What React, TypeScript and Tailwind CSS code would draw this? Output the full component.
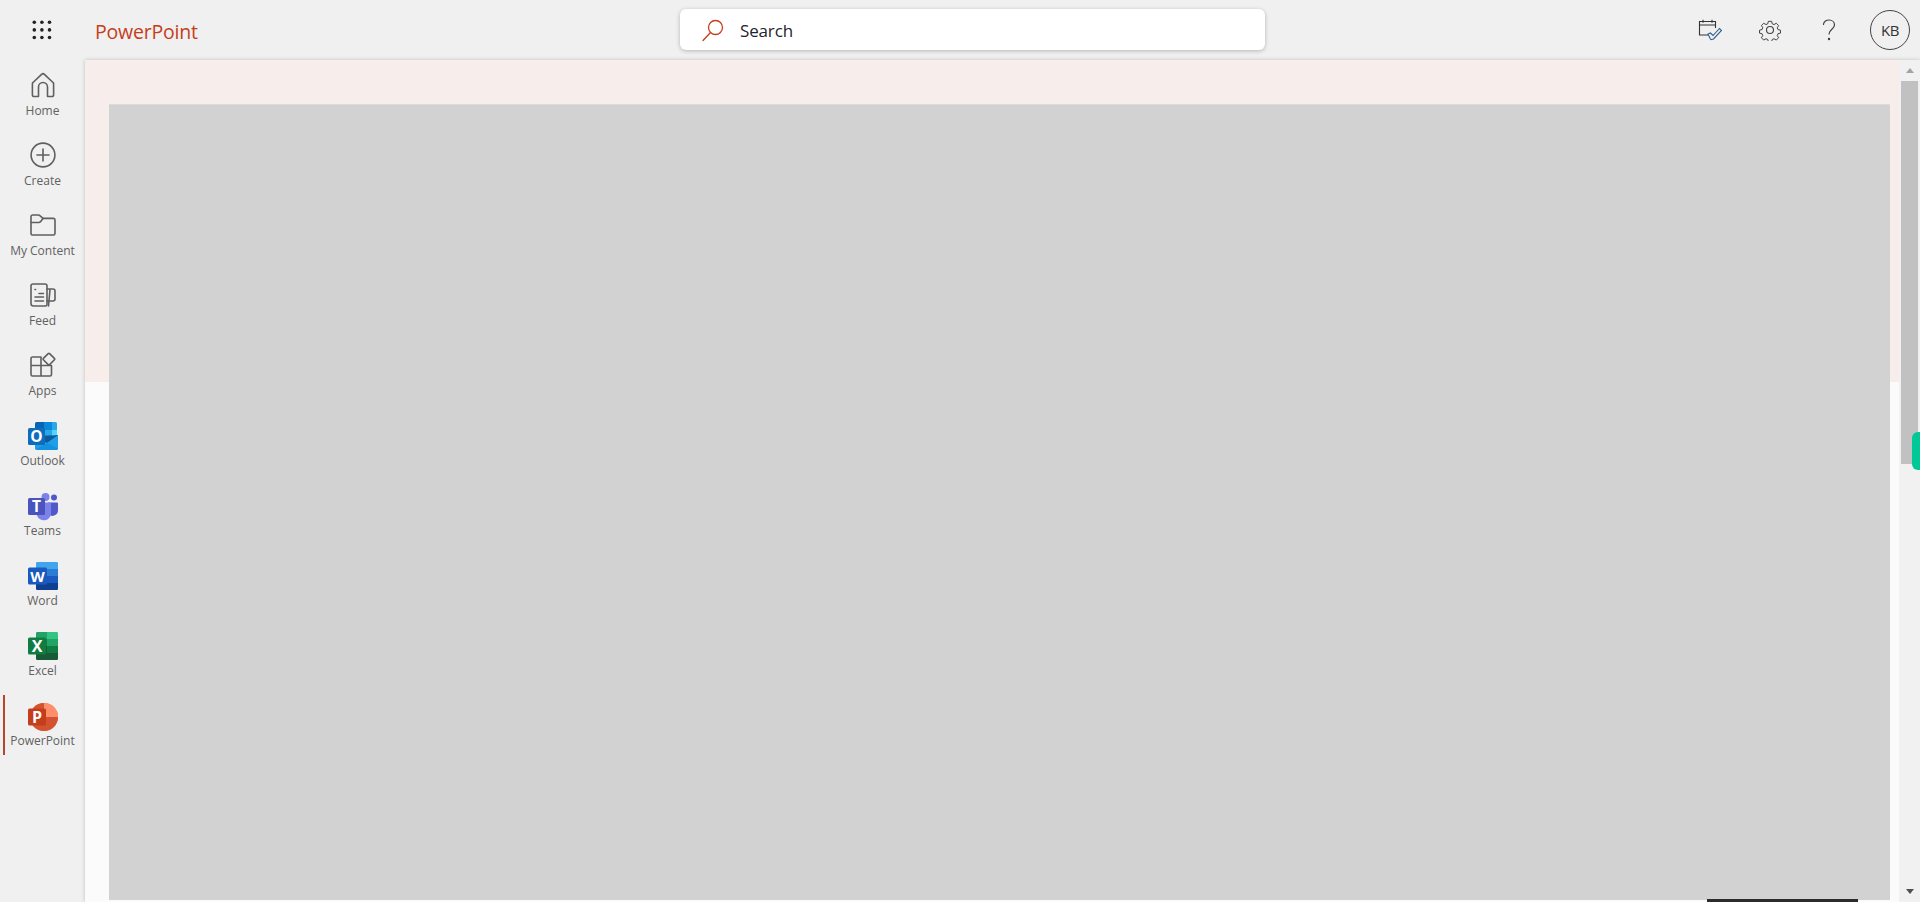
const font = "font-['Open_Sans','Noto_Sans',sans-serif]";

function Grid() {
  const dots = [0, 1, 2, 3, 4, 5, 6, 7, 8];
  return (
    <svg width="20" height="20" viewBox="0 0 20 20" fill="#222">
      {dots.map((d) => (
        <circle key={d} cx={2.3 + (d % 3) * 7.6} cy={2.3 + Math.floor(d / 3) * 7.6} r="1.800" />
      ))}
    </svg>
  );
}

const line = { fill: "none", stroke: "#5f5f5f", strokeWidth: 1.6, strokeLinejoin: "round" as const, strokeLinecap: "round" as const };

function Home() {
  return (
    <svg width="24" height="26" viewBox="0 0 24 26" {...line}>
      <path d="M2 10.500 10.600 2.400a2 2 0 0 1 2.800 0L22 10.500a1.500 1.500 0 0 1 .6 1.200V23a1.500 1.500 0 0 1-1.500 1.500h-4.600V15a4.500 4.500 0 0 0-9 0v9.500H3A1.500 1.500 0 0 1 1.400 23V11.700a1.500 1.500 0 0 1 .6-1.200Z" />
    </svg>
  );
}
function Create() {
  return (
    <svg width="26" height="26" viewBox="0 0 26 26" {...line}>
      <circle cx="13" cy="13" r="11.900" />
      <path d="M13 7v12M7 13h12" />
    </svg>
  );
}
function Folder() {
  return (
    <svg width="26" height="22" viewBox="0 0 26 22" {...line}>
      <path d="M2.700 1h5.600c.6 0 1.200.2 1.600.6L13 4.400H23.500A1.600 1.600 0 0 1 25 6v13.500a1.600 1.600 0 0 1-1.600 1.500H2.700A1.600 1.600 0 0 1 1 19.500V2.700A1.600 1.600 0 0 1 2.700 1Z" />
      <path d="M1 8.500h7.800c.6 0 1.100-.2 1.500-.6L13 4.400" />
    </svg>
  );
}
function Feed() {
  return (
    <svg width="26" height="24" viewBox="0 0 26 24" {...line}>
      <path d="M3 1h12a2 2 0 0 1 2 2v18.500a1.500 1.500 0 0 1-1.500 1.500H3.500A2.500 2.500 0 0 1 1 20.500V3a2 2 0 0 1 2-2Z" />
      <path d="M17 6h6a2 2 0 0 1 2 2v8a2 2 0 0 1-2 2h-6M20 6.500 18.500 23" />
      <path d="M5 6.500h.6M9 10.500h4.500M5 14h8.500M5 18h8.500" />
    </svg>
  );
}
function Apps() {
  return (
    <svg width="26" height="26" viewBox="0 0 26 26" {...line}>
      <path d="M2.500 5H11v8.500H1V6.500A1.500 1.500 0 0 1 2.500 5ZM1 13.500h10V24H2.500A1.500 1.500 0 0 1 1 22.500v-9ZM11 13.500h10.500V22.500a1.500 1.500 0 0 1-1.500 1.500H11V13.500Z" />
      <path d="m19.600 1.600 4.800 4.800a1 1 0 0 1 0 1.400l-4.800 4.800a1 1 0 0 1-1.400 0l-4.800-4.800a1 1 0 0 1 0-1.400l4.800-4.800a1 1 0 0 1 1.400 0Z" />
    </svg>
  );
}

const letter = { fill: "#fff", fontFamily: "'Open Sans',sans-serif", fontWeight: 700, textAnchor: "middle" as const };

function Outlook() {
  return (
    <svg width="30" height="28" viewBox="0 0 30 28">
      <path d="M7 1.500A1.500 1.500 0 0 1 8.500 0H24v8H7Z" fill="#0364b8" />
      <rect x="16" y="0" width="8" height="8" fill="#0a87d8" />
      <path d="M24 0h3.500A1.500 1.500 0 0 1 29 1.500V12h-5Z" fill="#28a8ea" />
      <rect x="7" y="8" width="9" height="7" fill="#0078d4" />
      <rect x="16" y="8" width="8" height="7" fill="#28a8ea" />
      <rect x="24" y="8" width="5" height="5" fill="#50d9ff" />
      <path d="M7 14h23v12.500a1.500 1.500 0 0 1-1.500 1.500H9a2 2 0 0 1-2-2Z" fill="#1490df" />
      <path d="m9 14 21-1v1L19 21Z" fill="#0f5a9e" />
      <path d="M7 15 19 21l11-8v13.500L19 21 8 27.500a1.500 1.500 0 0 1-1-1.500Z" fill="#1f9fe6" />
      <rect x="0" y="6" width="17" height="17" rx="1.500" fill="#0f6cbd" />
      <text x="8.500" y="20" fontSize="15.500" {...letter}>O</text>
    </svg>
  );
}
function Teams() {
  return (
    <svg width="30" height="28" viewBox="0 0 30 28">
      <circle cx="26" cy="4.500" r="3" fill="#5059c9" />
      <path d="M20 9.500h9a1 1 0 0 1 1 1v7a5.500 5.500 0 0 1-10 3Z" fill="#5059c9" />
      <circle cx="17.500" cy="4" r="4" fill="#7b83eb" />
      <path d="M9 9.500h13a1 1 0 0 1 1 1V20a7.200 7.200 0 0 1-14 2.500Z" fill="#7b83eb" />
      <rect x="0" y="5" width="17" height="17" rx="1.500" fill="#4b53bc" />
      <text x="8.500" y="19" fontSize="15.500" {...letter}>T</text>
    </svg>
  );
}
function Word() {
  return (
    <svg width="30" height="28" viewBox="0 0 30 28">
      <path d="M8 1.200A1.200 1.200 0 0 1 9.200 0H28.800A1.200 1.200 0 0 1 30 1.200V7H8Z" fill="#41a5ee" />
      <rect x="8" y="7" width="22" height="7" fill="#2b7cd3" />
      <rect x="8" y="14" width="22" height="7" fill="#185abd" />
      <path d="M8 21h22v5.800a1.200 1.200 0 0 1-1.200 1.200H9.200A1.200 1.200 0 0 1 8 26.800Z" fill="#103f91" />
      <rect x="0" y="5.500" width="19" height="17" rx="1.500" fill="#185abd" />
      <text x="9.500" y="19.500" fontSize="15" {...letter}>W</text>
    </svg>
  );
}
function Excel() {
  return (
    <svg width="30" height="28" viewBox="0 0 30 28">
      <path d="M8 1.200A1.200 1.200 0 0 1 9.200 0H19v7H8Z" fill="#21a366" />
      <path d="M19 0h9.800A1.200 1.200 0 0 1 30 1.200V7H19Z" fill="#33c481" />
      <rect x="8" y="7" width="11" height="7" fill="#107c41" />
      <rect x="19" y="7" width="11" height="7" fill="#21a366" />
      <rect x="8" y="14" width="11" height="7" fill="#185c37" />
      <rect x="19" y="14" width="11" height="7" fill="#107c41" />
      <path d="M8 21h22v5.800a1.200 1.200 0 0 1-1.200 1.200H9.200A1.200 1.200 0 0 1 8 26.800Z" fill="#185c37" />
      <rect x="0" y="5.500" width="18" height="17" rx="1.500" fill="#107c41" />
      <text x="9" y="19.700" fontSize="16" {...letter}>X</text>
    </svg>
  );
}
function Ppt() {
  return (
    <svg width="30" height="28" viewBox="0 0 30 28">
      <circle cx="16" cy="14" r="14" fill="#ed6c47" />
      <path d="M16 0a14 14 0 0 1 14 14H16Z" fill="#ff8f6b" />
      <path d="M16 0a14 14 0 0 0-14 14h14Z" fill="#d35230" />
      <path d="M2 14a14 14 0 0 0 14 14 14 14 0 0 0 14-14H16Z" fill="#d35230" />
      <rect x="0" y="5.500" width="18" height="17" rx="1.500" fill="#c43e1c" />
      <text x="9" y="19.700" fontSize="16" {...letter}>P</text>
    </svg>
  );
}

const nav = [
  { label: "Home", icon: <Home />, box: "h-8" },
  { label: "Create", icon: <Create />, box: "h-8" },
  { label: "My Content", icon: <Folder />, box: "h-8" },
  { label: "Feed", icon: <Feed />, box: "h-8" },
  { label: "Apps", icon: <Apps />, box: "h-8" },
  { label: "Outlook", icon: <Outlook />, box: "h-8 pt-[2px]" },
  { label: "Teams", icon: <Teams />, box: "h-8 pt-[3px]" },
  { label: "Word", icon: <Word />, box: "h-8 pt-[2px]" },
  { label: "Excel", icon: <Excel />, box: "h-8 pt-[2px]" },
  { label: "PowerPoint", icon: <Ppt />, box: "h-8 pt-[3px]", active: true },
];

export default function App() {
  return (
    <div className={`${font} flex h-[902px] w-[1920px] flex-col overflow-hidden bg-[#f0f0f0]`}>
      <header className="flex h-[60px] shrink-0 items-center">
        <div className="flex w-[85px] shrink-0 justify-center pr-[1px] pb-[1px]">
          <Grid />
        </div>
        <div className="w-[595px] shrink-0 pt-[3px] pl-[10px] text-[19.500px] leading-none tracking-[-0.2px] text-[#c43e1c]">PowerPoint</div>
        <div className="mb-[1px] flex h-[41px] w-[585px] shrink-0 items-center rounded-[6px] bg-white pl-[21px] shadow-[0_1px_4px_rgba(0,0,0,0.25)]">
          <svg width="24" height="24" viewBox="0 0 24 24" fill="none" stroke="#c43e1c" strokeWidth="1.300" strokeLinecap="round">
            <circle cx="14.500" cy="9.500" r="7" />
            <path d="M9.500 14.500 2 22.500" />
          </svg>
          <span className="ml-[15px] pt-[2px] text-[17px] tracking-[-0.15px] text-[#1f2430]">Search</span>
        </div>
        <div className="ml-auto flex items-center pr-[10px]">
          <svg className="mr-[37px]" width="24" height="22" viewBox="0 0 24 22" fill="none" stroke="#333" strokeWidth="1.100">
            <path d="M10 16H1.500V2.500h16V9" />
            <path d="M1.500 6h16M5 .8v3M14 .8v3" />
            <path d="m10 15 2.500-1 2.500 2.500L21.500 9.500l2 2-8 8.500-2.500 .7-1-1.500Z" stroke="#2f5f8f" />
          </svg>
          <svg className="mr-[41px]" width="22" height="22" viewBox="0 0 24 24" fill="none" stroke="#404040" strokeWidth="1.200" strokeLinejoin="round">
            <circle cx="12" cy="12" r="3.800" />
            <path d="M10 1.500h4l.7 3 2.200.9 2.700-1.600 2.800 2.800-1.600 2.700.9 2.200 3 .7v3.600l-3 .7-.9 2.200 1.600 2.700-2.800 2.800-2.700-1.600-2.200.9-.7 3h-4l-.7-3-2.200-.9-2.700 1.600-2.800-2.800 1.600-2.700-.9-2.200-3-.7v-3.600l3-.7.9-2.200-1.600-2.700 2.800-2.800 2.700 1.600 2.200-.9Z" transform="translate(1.200 1.200) scale(.9)" />
          </svg>
          <svg className="mr-[34px]" width="14" height="22" viewBox="0 0 14 22" fill="none" stroke="#404040" strokeWidth="1.200" strokeLinecap="round">
            <path d="M1.500 5.500C1.500 3 4 1 7 1s5.500 2 5.500 5c0 4-5.500 4.500-5.500 9" />
            <circle cx="7" cy="20" r=".6" fill="#404040" />
          </svg>
          <div className="flex h-[40px] w-[40px] items-center justify-center rounded-full border border-[#444] text-[15px] tracking-[-0.4px] text-[#333]">KB</div>
        </div>
      </header>
      <div className="flex min-h-0 flex-1">
        <nav className="flex w-[85px] shrink-0 flex-col gap-[10px] pt-[5px]">
          {nav.map((n) => (
            <div key={n.label} className="relative flex h-[60px] flex-col items-center pt-1">
              {n.active && <span className="absolute top-0 left-[3px] h-[60px] w-[2px] bg-[#b7472a]" />}
              <div className={`flex items-center justify-center ${n.box}`}>{n.icon}</div>
              <span className="pt-[1px] text-[12px] leading-[18px] whitespace-nowrap text-[#616161]">{n.label}</span>
            </div>
          ))}
        </nav>
        <main className="relative flex min-w-0 flex-1 bg-[linear-gradient(#f7eeeb_322px,#fbfbfb_322px)] shadow-[0_0_4px_rgba(0,0,0,0.2)]">
          <div className="flex min-w-0 flex-1 pt-[44px] pr-[9px] pl-[24px]">
            <div className="h-[796px] flex-1 border-t border-[#dcdcdc] bg-[#d2d2d2]" />
          </div>
          <div className="flex w-[21px] shrink-0 flex-col items-center bg-[#f1f1f1]">
            <div className="flex h-[21px] items-center justify-center">
              <div className="h-0 w-0 border-x-[4.500px] border-b-[5px] border-x-transparent border-b-[#a3a3a3]" />
            </div>
            <div className="h-[383px] w-[17px] bg-[#c1c1c1]" />
            <div className="flex-1" />
            <div className="flex h-[21px] items-center justify-center">
              <div className="h-0 w-0 border-x-[4.500px] border-t-[5px] border-x-transparent border-t-[#505050]" />
            </div>
          </div>
          <div className="absolute top-[372px] right-0 h-[38px] w-[8px] rounded-l-[6px] bg-[#00c896]" />
          <div className="absolute right-[62px] bottom-0 h-[3px] w-[151px] bg-[#2b2b2b]" />
        </main>
      </div>
    </div>
  );
}
